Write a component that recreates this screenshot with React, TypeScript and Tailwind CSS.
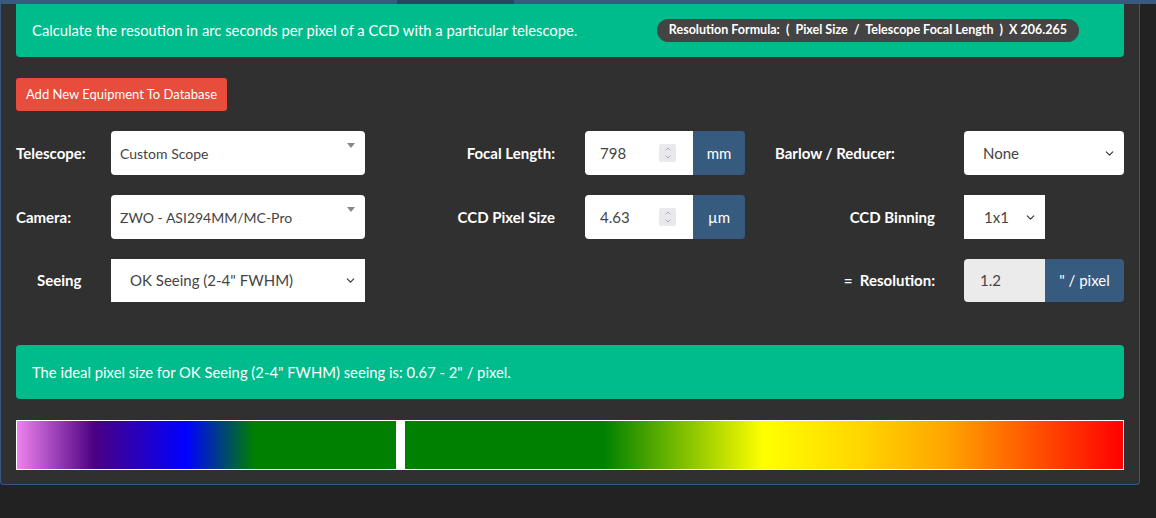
import { ChevronDown, ChevronUp } from 'lucide-react';

function Spinner() {
  return (
    <div className="flex h-[18px] w-[17px] flex-col items-center justify-center rounded-[2px] bg-[#e9e9ed] text-[#8a8a8a]">
      <ChevronUp size={8} strokeWidth={2} />
      <ChevronDown size={8} strokeWidth={2} />
    </div>
  );
}

function FancySelect({ value }: { value: string }) {
  return (
    <div className="relative flex h-[44px] w-[254px] items-center rounded-[4px] bg-white pl-[9px] text-[14px] font-normal text-[#444]">
      {value}
      <span className="absolute right-[10px] top-[12px] h-0 w-0 border-x-[4px] border-t-[5px] border-x-transparent border-t-[#888]" />
    </div>
  );
}

function NativeSelect({ value, width, rounded, pl }: { value: string; width: string; rounded?: boolean; pl: string }) {
  return (
    <div className={`flex h-[44px] ${width} items-center justify-between bg-white ${pl} pr-[8px] text-[15px] font-normal text-[#444] ${rounded ? 'rounded-[4px]' : ''}`}>
      <span>{value}</span>
      <ChevronDown size={13} strokeWidth={2} className="text-[#333]" />
    </div>
  );
}

function NumberGroup({ value, unit, unitW }: { value: string; unit: string; unitW: string }) {
  return (
    <div className="flex h-[44px] w-[160px] font-normal">
      <div className="flex flex-1 items-center justify-between rounded-l-[4px] bg-white pl-[15px] pr-[17px] text-[15px] text-[#444]">
        <span>{value}</span>
        <Spinner />
      </div>
      <div className={`flex ${unitW} items-center justify-center rounded-r-[4px] bg-[#375a7f] text-[15px] text-white`}>{unit}</div>
    </div>
  );
}

export default function App() {
  return (
    <div className="min-h-[518px] w-[1156px] bg-[#222] font-['Lato','Liberation_Sans',sans-serif]">
      <div className="flex h-[4px] w-full">
        <div className="w-[397px] bg-[#375a7f]" />
        <div className="w-[117px] bg-[#2b4560]" />
        <div className="flex-1 bg-[#375a7f]" />
      </div>
      <div className="w-[1140px] rounded-b-[4px] border border-t-0 border-[#375a7f] bg-[#303030] px-[15px] pb-[14px]">
        <div className="flex h-[53px] items-center justify-between rounded-b-[4px] bg-[#00bc8c] pl-[16px] pr-[45px]">
          <span className="text-[14.8px] text-white">Calculate the resoution in arc seconds per pixel of a CCD with a particular telescope.</span>
          <span className="whitespace-pre rounded-full bg-[#444] px-[12px] py-[2px] text-[12.5px] font-bold text-white">Resolution Formula:  (  Pixel Size  /  Telescope Focal Length  )  X 206.265</span>
        </div>

        <button className="mt-[21px] h-[33px] w-[211px] rounded-[3px] bg-[#e74c3c] text-[13px] text-white">Add New Equipment To Database</button>

        <div className="mt-[20px] flex flex-col gap-[20px] text-[15px] font-bold text-white">
          <div className="flex items-center">
            <div className="w-[95px]">Telescope:</div>
            <FancySelect value="Custom Scope" />
            <div className="w-[220px] pr-[30px] text-right">Focal Length:</div>
            <NumberGroup value="798" unit="mm" unitW="w-[52px]" />
            <div className="w-[219px] pl-[30px]">Barlow / Reducer:</div>
            <NativeSelect value="None" width="w-[160px]" rounded pl="pl-[19px]" />
          </div>
          <div className="flex items-center">
            <div className="w-[95px]">Camera:</div>
            <FancySelect value="ZWO - ASI294MM/MC-Pro" />
            <div className="w-[220px] pr-[30px] text-right">CCD Pixel Size</div>
            <NumberGroup value="4.63" unit="µm" unitW="w-[52px]" />
            <div className="w-[219px] pr-[29px] text-right">CCD Binning</div>
            <NativeSelect value="1x1" width="w-[81px]" pl="pl-[20px]" />
          </div>
          <div className="flex items-center">
            <div className="w-[95px] pl-[21px]">Seeing</div>
            <div className="flex h-[43px] w-[254px] items-center justify-between bg-white pl-[19px] pr-[8px] text-[15px] font-normal text-[#444]">
              <span>OK Seeing (2-4" FWHM)</span>
              <ChevronDown size={13} strokeWidth={2} className="text-[#333]" />
            </div>
            <div className="w-[380px]" />
            <div className="w-[219px] whitespace-pre pr-[29px] text-right">=  Resolution:</div>
            <div className="flex h-[43px] w-[160px] font-normal">
              <div className="flex w-[81px] items-center rounded-l-[4px] bg-[#ebebeb] pl-[16px] text-[15px] text-[#444]">1.2</div>
              <div className="flex flex-1 items-center justify-center rounded-r-[4px] bg-[#375a7f] text-[15px] text-white">" / pixel</div>
            </div>
          </div>
        </div>

        <div className="mt-[43px] flex h-[54px] items-center rounded-[4px] bg-[#00bc8c] pl-[16px] text-[14.8px] text-white">
          The ideal pixel size for OK Seeing (2-4" FWHM) seeing is: 0.67 - 2" / pixel.
        </div>

        <div className="relative mt-[21px] h-[50px] border border-white bg-[linear-gradient(to_right,#ee82ee_0%,#4b0082_7%,#0000ff_15.3%,#008000_21.5%,#008000_53%,#ffff00_67.5%,#ffd700_76%,#ffa500_84%,#ff0000_100%)]">
          <div className="absolute top-0 bottom-0 left-[379px] w-[9px] bg-white" />
        </div>
      </div>
    </div>
  );
}
